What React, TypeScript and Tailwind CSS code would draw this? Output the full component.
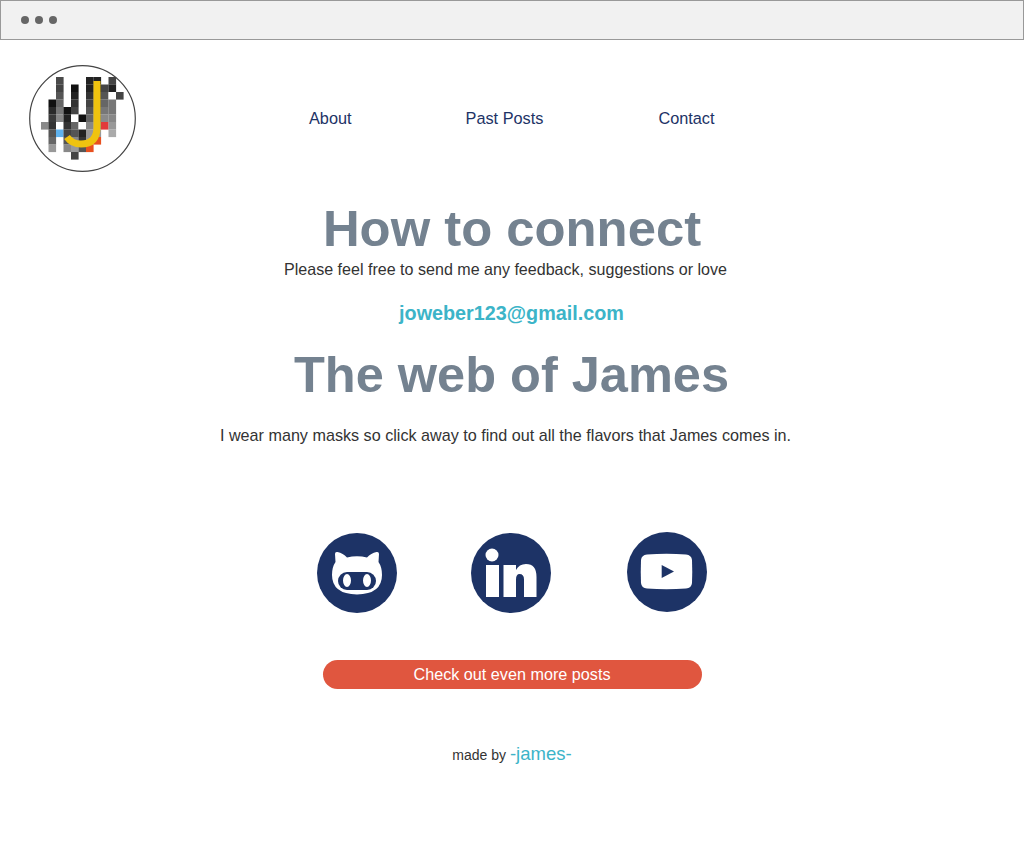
import React from 'react';

const sans = "font-['Liberation_Sans',Arial,sans-serif]";

// logo columns: [x index, first row, colours top to bottom]
const logoColumns: [number, number, string[]][] = [
  [0, 6, ['#8a8a8a']],
  [1, 3, ['#111111', '#2a2a2a', '#3a3a3a', '#333333', '#555555', '#666666', '#999999']],
  [2, 0, ['#4a4a4a', '#444444', '#555555', '#666666', '#777777', '#888888', '#ffffff', '#5fb2ee']],
  [3, 4, ['#111111', '#222222', '#333333', '#444444', '#555555', '#888888']],
  [4, 1, ['#111111', '#222222', '#333333', '#444444', '#ffffff', '#666666', '#555555', '#888888', '#999999', '#444444']],
  [5, 5, ['#111111', '#ffffff', '#222222', '#333333', '#555555']],
  [6, 0, ['#222222', '#222222', '#333333', '#444444', '#555555', '#666666', '#888888', '#999999', '#999999', '#e8501f']],
  [7, 0, ['#222222', '#2b2b2b', '#444444', '#555555', '#666666', '#777777', '#888888', '#999999', '#e8501f']],
  [8, 1, ['#444444', '#555555', '#666666', '#777777', '#8a8a8a', '#e23a3a']],
  [9, 0, ['#444444', '#222222', '#ffffff', '#777777', '#777777', '#888888', '#999999', '#aaaaaa']],
  [10, 2, ['#444444']],
];

const Logo = () => (
  <svg width="107" height="107" viewBox="0 0 107 107" className="shrink-0">
    <circle cx="53.500" cy="53.500" r="52.800" fill="#fff" stroke="#444" strokeWidth="1.200" />
    {logoColumns.map(([col, start, colours]) =>
      colours.map((c, i) => (
        <rect key={`${col}-${i}`} x={12 + col * 7.5} y={12 + (start + i) * 7.5} width="7.6" height="7.6" fill={c} />
      )),
    )}
    <path d="M68 16 V62 Q68 79 52 79 Q43 79 38 72" fill="none" stroke="#efc30f" strokeWidth="7" />
  </svg>
);

const Github = () => (
  <svg width="80" height="80" viewBox="0 0 80 80">
    <circle cx="40" cy="40" r="40" fill="#1d3366" />
    <path
      d="M18 21 Q18 18.500 20.500 19 Q26 20 30 24.500 Q40 22 50 24.500 Q54 20 59.500 19 Q62 18.500 62 21 L61.500 29 Q65 34 65 42 Q65 61 40 61.500 Q15 61 15 42 Q15 34 18.500 29 Z"
      fill="#fff"
    />
    <rect x="21" y="39" width="38" height="18" rx="9" fill="#1d3366" />
    <ellipse cx="30" cy="47.500" rx="4" ry="6.500" fill="#fff" />
    <ellipse cx="50" cy="47.500" rx="4" ry="6.500" fill="#fff" />
  </svg>
);

const Linkedin = () => (
  <svg width="80" height="80" viewBox="0 0 80 80">
    <circle cx="40" cy="40" r="40" fill="#1d3366" />
    <circle cx="21" cy="22" r="6.500" fill="#fff" />
    <rect x="15" y="32" width="13" height="32" fill="#fff" />
    <path
      d="M32.500 32 H45 V37 Q48 31 55 31 Q65.500 31 65.500 44 V64 H53 V46.500 Q53 41 48.500 41 Q45 41 45 46.500 V64 H32.500 Z"
      fill="#fff"
    />
  </svg>
);

const Youtube = () => (
  <svg width="80" height="80" viewBox="0 0 80 80">
    <circle cx="40" cy="40" r="40" fill="#1d3366" />
    <path
      d="M20 22.500 Q39.500 21 59 22.500 Q64.500 23 65 28 Q65.500 39.500 65 51 Q64.500 56 59 56.500 Q39.500 58 20 56.500 Q14.500 56 14 51 Q13.500 39.500 14 28 Q14.500 23 20 22.500 Z"
      fill="#fff"
    />
    <path d="M34.700 33 L47 39.500 L34.700 46 Z" fill="#1d3366" />
  </svg>
);

export default function App() {
  return (
    <div className={`${sans} min-h-[860px] bg-white text-[#333333]`}>
      <div className="flex h-10 items-center gap-[6px] border border-[#999999] bg-[#f1f1f1] pl-5">
        <span className="size-2 rounded-full bg-[#666666]" />
        <span className="size-2 rounded-full bg-[#666666]" />
        <span className="size-2 rounded-full bg-[#666666]" />
      </div>

      <nav className="flex items-center pl-[29px] pt-[25px] text-[16.3px] text-[#1d3366]">
        <Logo />
        <a className="ml-[173px]">About</a>
        <a className="ml-[114px]">Past Posts</a>
        <a className="ml-[115px]">Contact</a>
      </nav>

      <main className="flex flex-col items-center">
        <h1 className="mt-[27px] text-[50.8px] leading-[60px] font-bold text-[#748290]">How to connect</h1>
        <p className="-mt-px pr-[13px] text-[16.07px] leading-[23px]">Please feel free to send me any feedback, suggestions or love</p>
        <a className="mt-[20px] pr-px text-[19.8px] leading-[24px] font-bold text-[#3cb4c8]">joweber123@gmail.com</a>
        <h2 className="mt-[20px] pr-px text-[50.5px] leading-[60px] font-bold text-[#748290]">The web of James</h2>
        <p className="mt-[18px] pr-[13px] text-[16.17px] leading-[24px]">
          I wear many masks so click away to find out all the flavors that James comes in.
        </p>

        <div className="mt-[86px] flex h-[81px] items-start">
          <Github />
          <div className="ml-[74px]">
            <Linkedin />
          </div>
          <div className="-mt-px ml-[76px]">
            <Youtube />
          </div>
        </div>

        <button className="mt-[46px] h-[29px] w-[379px] rounded-full bg-[#e0563f] text-[16.2px] text-white">
          Check out even more posts
        </button>

        <p className="mt-[53px] text-sm leading-[24px]">
          made by <span className="text-[18.5px] text-[#3cb4c8]">-james-</span>
        </p>
      </main>
    </div>
  );
}
